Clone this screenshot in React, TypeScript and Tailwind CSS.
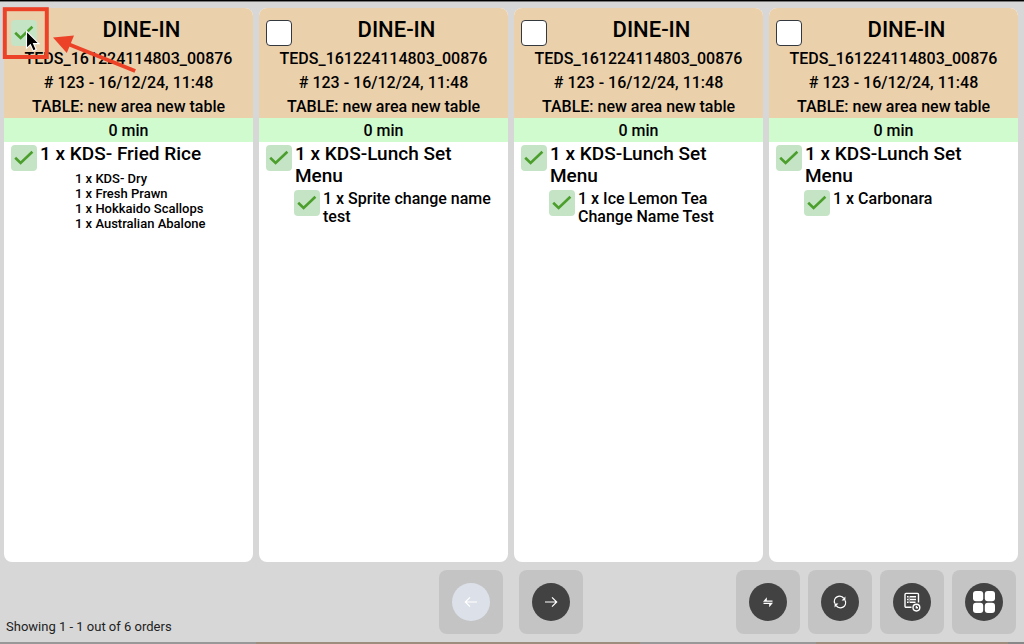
import React, { useState } from 'react';

interface SubItem {
  name: string;
}

interface OrderItem {
  name: string;
  modifiers?: string[];
  children?: SubItem[];
}

interface Order {
  id: string;
  type: string;
  ref: string;
  info: string;
  table: string;
  wait: string;
  selected: boolean;
  items: OrderItem[];
}

const base = {
  type: 'DINE-IN',
  ref: 'TEDS_161224114803_00876',
  info: '# 123 - 16/12/24, 11:48',
  table: 'TABLE: new area new table',
  wait: '0 min',
};

const ORDERS: Order[] = [
  {
    ...base,
    id: 'o1',
    selected: true,
    items: [
      {
        name: '1 x KDS- Fried Rice',
        modifiers: ['1 x KDS- Dry', '1 x Fresh Prawn', '1 x Hokkaido Scallops', '1 x Australian Abalone'],
      },
    ],
  },
  { ...base, id: 'o2', selected: false, items: [{ name: '1 x KDS-Lunch Set Menu', children: [{ name: '1 x Sprite change name test' }] }] },
  { ...base, id: 'o3', selected: false, items: [{ name: '1 x KDS-Lunch Set Menu', children: [{ name: '1 x Ice Lemon Tea Change Name Test' }] }] },
  { ...base, id: 'o4', selected: false, items: [{ name: '1 x KDS-Lunch Set Menu', children: [{ name: '1 x Carbonara' }] }] },
];

const Tick: React.FC<{ id: string; label?: string; initial: boolean }> = ({ id, label, initial }) => {
  const [checked, setChecked] = useState(initial);
  return (
    <span className="relative block size-[26px] shrink-0">
      <input
        id={id}
        type="checkbox"
        aria-label={label}
        checked={checked}
        onChange={() => setChecked(!checked)}
        className="block size-[26px] cursor-pointer appearance-none rounded border border-[#34383f] bg-white checked:border-0 checked:bg-[#c5e4c6]"
      />
      {checked && (
        <svg viewBox="0 0 26 26" className="pointer-events-none absolute inset-0 size-[26px]" fill="none" stroke="#4c9f2c" strokeWidth="2.6">
          <path d="M4.2 12.8 L9.6 18 L21.4 6.8" />
        </svg>
      )}
    </span>
  );
};

const OrderCard: React.FC<{ order: Order }> = ({ order }) => (
  <article className="flex min-w-0 flex-1 flex-col overflow-hidden rounded-lg bg-white font-medium text-black">
    <header className="h-[110px] bg-[#ebd0ac] pt-[5px] text-center text-base leading-6">
      <div className="flex h-[34px] items-center px-[7px]">
        <div className="pt-1.5">
          <Tick id={order.id} label={`Select order ${order.ref}`} initial={order.selected} />
        </div>
        <h2 className="flex-1 text-[22px]">{order.type}</h2>
      </div>
      <p>{order.ref}</p>
      <p>{order.info}</p>
      <p>{order.table}</p>
    </header>
    <div className="h-6 bg-[#cffbcf] text-center text-base leading-[26px]">{order.wait}</div>
    <ul className="flex-1 overflow-y-auto pt-px pr-3 pl-[7px]">
      {order.items.map((item, i) => {
        const itemId = `${order.id}-${i}`;
        return (
          <li key={itemId}>
            <div className="flex gap-[3px]">
              <div className="pt-0.5">
                <Tick id={itemId} initial />
              </div>
              <label htmlFor={itemId} className="text-[19px] leading-[22px]">{item.name}</label>
            </div>
            {item.modifiers && (
              <ul className="pl-16 text-[13px] leading-[15px]">
                {item.modifiers.map(m => <li key={m}>{m}</li>)}
              </ul>
            )}
            {item.children?.map((child, j) => {
              const childId = `${itemId}-${j}`;
              return (
                <div key={childId} className="flex gap-[3px] pt-[3px] pl-7">
                  <Tick id={childId} initial />
                  <label htmlFor={childId} className="text-base leading-[18px]">{child.name}</label>
                </div>
              );
            })}
          </li>
        );
      })}
    </ul>
  </article>
);

const ToolButton: React.FC<{ label: string; disabled?: boolean; children: React.ReactNode }> = ({ label, disabled, children }) => (
  <button
    type="button"
    aria-label={label}
    disabled={disabled}
    className="group flex size-16 cursor-pointer items-center justify-center rounded-lg bg-[#c4c4c4] disabled:cursor-default"
  >
    <span className="flex size-[38px] items-center justify-center rounded-full bg-[#424242] text-white group-disabled:bg-[#dce0e9]">
      {children}
    </span>
  </button>
);

const App: React.FC = () => (
  <div className="relative flex h-screen flex-col bg-[#d7d7d7] font-[Roboto,'Liberation_Sans',sans-serif] text-[#222]">
    <div className="h-0.5 shrink-0 border-b border-[#777] bg-black" />

    <main className="flex min-h-0 flex-1 gap-1.5 pt-1.5 pr-1.5 pl-1">
      {ORDERS.map(order => <OrderCard key={order.id} order={order} />)}
    </main>

    <footer className="grid shrink-0 grid-cols-[1fr_auto_1fr] pt-2 pr-2 pb-2 pl-1.5">
      <p className="self-end text-[13px] leading-[14px]">Showing 1 - 1 out of 6 orders</p>
      <div className="flex gap-4">
        <ToolButton label="Previous page" disabled>
          <svg viewBox="0 0 14 14" className="size-3.5" fill="none" stroke="currentColor" strokeWidth="1.2">
            <path d="M13 7H1.5M6 2.3L1.3 7L6 11.7" />
          </svg>
        </ToolButton>
        <ToolButton label="Next page">
          <svg viewBox="0 0 14 14" className="size-3.5" fill="none" stroke="currentColor" strokeWidth="1.2">
            <path d="M1 7H12.5M8 2.3L12.7 7L8 11.7" />
          </svg>
        </ToolButton>
      </div>
      <div className="flex justify-end gap-2">
        <ToolButton label="Switch view">
          <svg viewBox="0 0 12 12" className="size-3" fill="currentColor">
            <path d="M1 5.7L4.8 1.2V4.5H10.5V5.7ZM11 6.7L7.2 11.2V7.9H1.5V6.7Z" />
          </svg>
        </ToolButton>
        <ToolButton label="Refresh">
          <svg viewBox="0 0 14 14" className="size-3.5" fill="none" stroke="currentColor" strokeWidth="1.3">
            <path d="M1.8 8.5A5.2 5.2 0 0 1 10.8 3.4M12.2 5.5A5.2 5.2 0 0 1 3.2 10.6" />
            <path d="M12.4 1.4V5.4H8.6ZM1.6 12.6V8.6H5.4Z" fill="currentColor" stroke="none" />
          </svg>
        </ToolButton>
        <ToolButton label="Order history">
          <svg viewBox="0 0 20 20" className="size-5" fill="none" stroke="currentColor" strokeWidth="1.4">
            <path d="M9.5 15.2H4A1 1 0 0 1 3 14.2V2.4A1 1 0 0 1 4 1.4H15.5A1 1 0 0 1 16.5 2.4V10.5" />
            <path d="M5 4.7H6.5M8 4.7H14M5 7.5H6.5M8 7.5H14M5 10.3H6.5M8 10.3H13.5" />
            <path d="M7.2 4V11" strokeWidth="0.6" />
            <circle cx="14.4" cy="15.6" r="3.4" />
            <path d="M14.4 13.8V15.8H16" />
          </svg>
        </ToolButton>
        <ToolButton label="Menu">
          <svg viewBox="0 0 24 24" className="size-6" fill="currentColor">
            <rect x="1" y="1" width="10.2" height="10.2" rx="3" />
            <rect x="12.8" y="1" width="10.2" height="10.2" rx="3" />
            <rect x="1" y="12.8" width="10.2" height="10.2" rx="3" />
            <rect x="12.8" y="12.8" width="10.2" height="10.2" rx="3" />
          </svg>
        </ToolButton>
      </div>
    </footer>

    <div className="flex h-0.5 shrink-0">
      <div className="w-1/4 bg-[#989898]" />
      <div className="w-3/8 bg-[#9c8d7c]" />
      <div className="flex-1 bg-[#989898]" />
      <div className="w-3/16 bg-[#9c8d7c]" />
      <div className="w-4 bg-[#888]" />
    </div>

    {/* Highlight around the first order's tick box */}
    <svg width="140" height="80" viewBox="0 0 140 80" className="pointer-events-none absolute top-0 left-0">
      <rect x="4.8" y="9.2" width="42" height="47.8" fill="none" stroke="#ec4328" strokeWidth="4" />
      <path d="M68 44L135.2 71" stroke="#ec4328" strokeWidth="4" />
      <path d="M53 37.5L74 35.5L66.8 53Z" fill="#ec4328" />
      <path d="M26.5 31V48.3L30.4 44.7L33.2 51L36.2 49.6L33.5 43.6H39Z" fill="#000" stroke="#fff" strokeWidth="1.1" />
    </svg>
  </div>
);

export default App;
